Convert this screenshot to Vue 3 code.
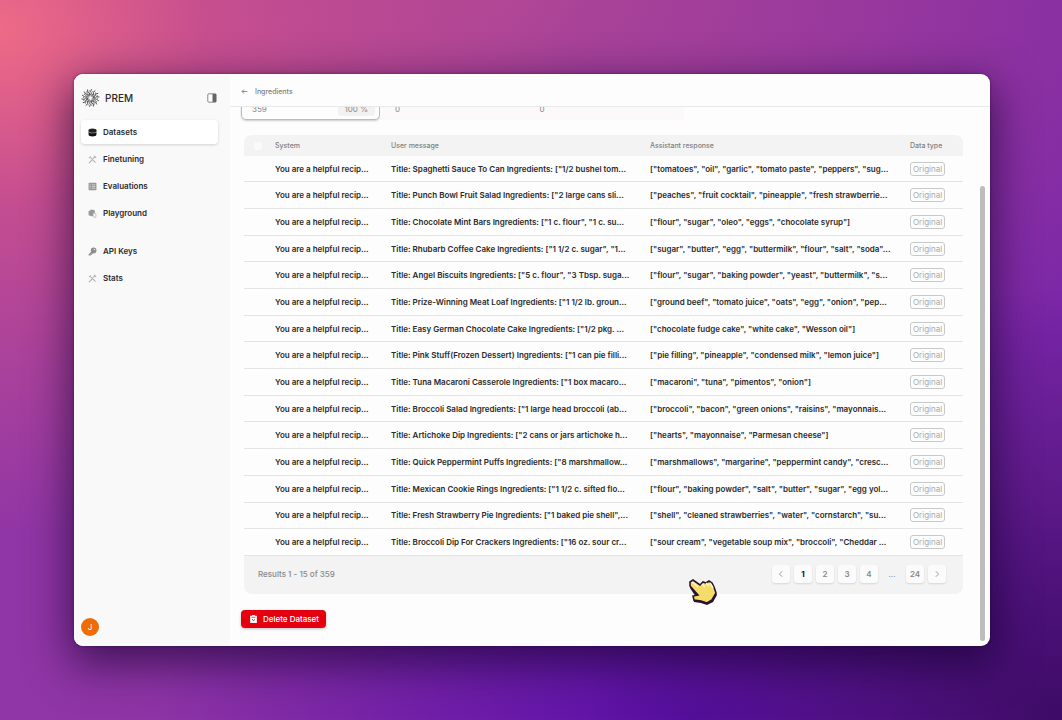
<template>
  <div class="desktop">
    <div class="window">
      <aside class="sidebar">
        <div class="brand">
          <svg class="brand__logo" viewBox="0 0 40 40" aria-hidden="true">
            <g v-for="n in 14" :key="n" :transform="`rotate(${n * 25.7} 20 20)`">
              <path d="M20 14l3-4-3-3 2-5" fill="none" stroke="#444" stroke-width="1.8" stroke-linecap="round" />
              <circle cx="25" cy="6" r="1.1" fill="#444" />
            </g>
            <circle cx="20" cy="20" r="8" fill="none" stroke="#555" stroke-width="2" stroke-dasharray="3 2" />
            <circle cx="20" cy="20" r="4" fill="none" stroke="#777" stroke-width="1.5" stroke-dasharray="2 1" />
          </svg>
          <span class="brand__name">PREM</span>
          <button class="brand__toggle" aria-label="Toggle sidebar">
            <svg viewBox="0 0 10 10">
              <rect x="0.8" y="0.8" width="8.4" height="8.4" rx="1" fill="#fff" stroke="#888" />
              <path d="M5.5 1h3.5v8H5.5z" fill="#666" />
            </svg>
          </button>
        </div>

        <nav class="menu">
          <a
            v-for="item in menu"
            :key="item.label"
            href="#"
            class="menu__item"
            :class="{ '-active': item.active, '-spaced': item.spaced }"
          >
            <svg class="menu__icon" viewBox="0 0 16 16" aria-hidden="true">
              <template v-if="item.icon === 'database'">
                <path d="M1 4v8c0 4 14 4 14 0V4z" fill="#111" />
                <ellipse cx="8" cy="4" rx="7" ry="3" fill="#222" />
                <path d="M1 6.5c1 3 13 3 14 0" fill="none" stroke="#ddd" />
              </template>
              <template v-else-if="item.icon === 'tools'">
                <path d="M2 14l5-5M9 6l4-3M4 4l9 9M11 2l3 3M2 5l3-2" fill="none" stroke="#b0b0b0" stroke-width="1.8" stroke-linecap="round" />
              </template>
              <template v-else-if="item.icon === 'list'">
                <rect x="1" y="1.5" width="14" height="13" rx="1" fill="#999" />
                <path d="M3 5h2M7 5h6M3 8h2M7 8h6M3 11h2M7 11h6" stroke="#ddd" stroke-width="1.3" />
              </template>
              <template v-else-if="item.icon === 'play'">
                <path d="M1 4l5-3 6 1v9l-5 2-6-2z" fill="#999" />
                <path d="M9 7l5 1v7l-5-1z" fill="#f5f5f5" stroke="#aaa" />
              </template>
              <template v-else>
                <path d="M6 8L1 13v2h4l5-5z" fill="#999" />
                <circle cx="10" cy="6" r="5" fill="#8c8c8c" />
                <circle cx="11.5" cy="4.5" r="1.3" fill="#eee" />
              </template>
            </svg>
            {{ item.label }}
          </a>
        </nav>

        <button class="avatar">J</button>
      </aside>

      <main class="main">
        <header class="topbar">
          <a href="#" class="topbar__back">
            <svg viewBox="0 0 10 10" aria-hidden="true">
              <path d="M9 5H1.5M4.5 2l-3 3 3 3" fill="none" stroke="#777" stroke-width="1.2" />
            </svg>
            Ingredients
          </a>
        </header>

        <div class="content">
          <div class="stats">
            <div class="stats__card">
              <span>359</span>
              <span class="stats__badge">100 %</span>
            </div>
            <div class="stats__rest">
              <span>0</span>
              <span>0</span>
            </div>
          </div>

          <section class="panel">
            <table class="table">
              <thead>
                <tr>
                  <th class="table__pick"><input type="checkbox" aria-label="Select all" /></th>
                  <th class="table__system">System</th>
                  <th class="table__user">User message</th>
                  <th>Assistant response</th>
                  <th class="table__type">Data type</th>
                </tr>
              </thead>
              <tbody>
                <tr v-for="row in rows" :key="row[0]">
                  <td></td>
                  <td>You are a helpful recip...</td>
                  <td>Title: {{ row[0] }}</td>
                  <td>{{ row[1] }}</td>
                  <td><span class="tag">Original</span></td>
                </tr>
              </tbody>
            </table>
            <footer class="pager">
              <span class="pager__info">Results 1 - 15 of 359</span>
              <div class="pager__pages">
                <button class="pager__btn" aria-label="Previous page">
                  <svg viewBox="0 0 10 10"><path d="M6.5 1.5L3 5l3.5 3.5" /></svg>
                </button>
                <button class="pager__btn -current">1</button>
                <button class="pager__btn">2</button>
                <button class="pager__btn">3</button>
                <button class="pager__btn">4</button>
                <span class="pager__gap">...</span>
                <button class="pager__btn">24</button>
                <button class="pager__btn" aria-label="Next page">
                  <svg viewBox="0 0 10 10"><path d="M3.5 1.5L7 5L3.5 8.5" /></svg>
                </button>
              </div>
            </footer>
          </section>

          <button class="delete">
            <svg viewBox="0 0 10 12" aria-hidden="true">
              <path d="M3 0h4v1h3v11H0V1h3z" fill="#fff" />
              <path d="M2 3.5h6M3 6l2 3 2-3" fill="none" stroke="#e5000f" />
            </svg>
            Delete Dataset
          </button>
        </div>
        <div class="scrollbar"></div>
      </main>
    </div>

    <svg class="cursor" viewBox="0 0 30 27" aria-hidden="true">
      <path d="M2 3l3-2 7 5 3-3 3 1 3-2 3 2 2 4 3 7-4 7-6 3-6-2-7-1-1-4 3-1-6-9z" fill="#24104a" transform="translate(0 1)" />
      <path d="M2 3l3-2 7 5 3-3 3 1 3-2 3 2 2 4 2 6-4 7-5 3-6-2-7-1-1-4 5-1-8-9z" fill="#f5dc69" stroke="#2a1426" stroke-width="1.6" />
      <path d="M4 3l6 5M14 5l3 3M18 4l3 3M22 4l3 5" fill="none" stroke="#fff6d0" stroke-width="1.5" />
    </svg>
  </div>
</template>

<script setup>
const menu = [
  { label: 'Datasets', icon: 'database', active: true },
  { label: 'Finetuning', icon: 'tools' },
  { label: 'Evaluations', icon: 'list' },
  { label: 'Playground', icon: 'play' },
  { label: 'API Keys', icon: 'key', spaced: true },
  { label: 'Stats', icon: 'tools' }
]

const rows = [
  ['Spaghetti Sauce To Can Ingredients: ["1/2 bushel tom...', '["tomatoes", "oil", "garlic", "tomato paste", "peppers", "sug...'],
  ['Punch Bowl Fruit Salad Ingredients: ["2 large cans sli...', '["peaches", "fruit cocktail", "pineapple", "fresh strawberrie...'],
  ['Chocolate Mint Bars Ingredients: ["1 c. flour", "1 c. su...', '["flour", "sugar", "oleo", "eggs", "chocolate syrup"]'],
  ['Rhubarb Coffee Cake Ingredients: ["1 1/2 c. sugar", "1...', '["sugar", "butter", "egg", "buttermilk", "flour", "salt", "soda"...'],
  ['Angel Biscuits Ingredients: ["5 c. flour", "3 Tbsp. suga...', '["flour", "sugar", "baking powder", "yeast", "buttermilk", "s...'],
  ['Prize-Winning Meat Loaf Ingredients: ["1 1/2 lb. groun...', '["ground beef", "tomato juice", "oats", "egg", "onion", "pep...'],
  ['Easy German Chocolate Cake Ingredients: ["1/2 pkg. ...', '["chocolate fudge cake", "white cake", "Wesson oil"]'],
  ['Pink Stuff(Frozen Dessert) Ingredients: ["1 can pie filli...', '["pie filling", "pineapple", "condensed milk", "lemon juice"]'],
  ['Tuna Macaroni Casserole Ingredients: ["1 box macaro...', '["macaroni", "tuna", "pimentos", "onion"]'],
  ['Broccoli Salad Ingredients: ["1 large head broccoli (ab...', '["broccoli", "bacon", "green onions", "raisins", "mayonnais...'],
  ['Artichoke Dip Ingredients: ["2 cans or jars artichoke h...', '["hearts", "mayonnaise", "Parmesan cheese"]'],
  ['Quick Peppermint Puffs Ingredients: ["8 marshmallow...', '["marshmallows", "margarine", "peppermint candy", "cresc...'],
  ['Mexican Cookie Rings Ingredients: ["1 1/2 c. sifted flo...', '["flour", "baking powder", "salt", "butter", "sugar", "egg yol...'],
  ['Fresh Strawberry Pie Ingredients: ["1 baked pie shell",...', '["shell", "cleaned strawberries", "water", "cornstarch", "su...'],
  ['Broccoli Dip For Crackers Ingredients: ["16 oz. sour cr...', '["sour cream", "vegetable soup mix", "broccoli", "Cheddar ...']
]
</script>

<style>
body {
  margin: 0;
}
</style>

<style scoped>
.desktop {
  box-sizing: border-box;
  min-height: 100vh;
  padding: 74px 72px 74px 74px;
  display: flex;
  position: relative;
  overflow: hidden;
  font-family: Inter, 'Liberation Sans', sans-serif;
  font-size: 8px;
  line-height: 12px;
  color: #2a2a2a;
  background:
    radial-gradient(ellipse 55% 70% at 0 4%, #ee6a86 0%, rgba(220, 88, 135, 0.65) 35%, transparent 100%),
    radial-gradient(ellipse 75% 60% at 50% 0, rgba(178, 72, 148, 0.85), transparent 100%),
    radial-gradient(ellipse 45% 60% at 100% 100%, #3d0b66, transparent 100%),
    radial-gradient(ellipse 50% 40% at 65% 100%, #5a0fa8, transparent 100%),
    linear-gradient(90deg, #9136a5, #7a26a8);
}

button {
  font: inherit;
  border: none;
  padding: 0;
  cursor: pointer;
}

a {
  color: inherit;
  text-decoration: none;
}

.window {
  flex: 1;
  min-width: 0;
  display: flex;
  overflow: hidden;
  border-radius: 9px;
  background: #fdfdfd;
  box-shadow: 0 14px 44px 4px rgba(20, 0, 45, 0.65), 0 0 3px rgba(30, 0, 50, 0.5);
}

.sidebar {
  box-sizing: border-box;
  width: 156px;
  flex-shrink: 0;
  padding: 14px 12px 10px 7px;
  display: flex;
  flex-direction: column;
  background: #faf9fa;
}

.brand {
  display: flex;
  align-items: center;
  gap: 5px;
  height: 20px;
  padding-right: 1px;
}

.brand__logo {
  width: 19px;
  height: 20px;
}

.brand__name {
  font-size: 10px;
  font-weight: 500;
  flex: 1;
}

.brand__toggle {
  width: 10px;
  height: 10px;
  background: none;
}

.brand__toggle svg {
  display: block;
}

.menu {
  margin-top: 12px;
  display: flex;
  flex-direction: column;
  gap: 3px;
}

.menu__item {
  display: flex;
  align-items: center;
  gap: 6px;
  height: 24px;
  padding-left: 7px;
  border-radius: 4px;
  font-weight: 600;
}

.menu__item.-active {
  background: #fff;
  box-shadow: 0 1px 3px rgba(0, 0, 0, 0.16);
}

.menu__item.-spaced {
  margin-top: 11px;
}

.menu__icon {
  width: 9px;
  height: 9px;
}

.avatar {
  width: 18px;
  height: 18px;
  margin-top: auto;
  border-radius: 50%;
  background: #ee6c05;
  color: #fff;
}

.main {
  flex: 1;
  min-width: 0;
  display: flex;
  flex-direction: column;
  position: relative;
}

.topbar {
  box-sizing: border-box;
  height: 33px;
  padding-top: 3px;
  flex-shrink: 0;
  display: flex;
  align-items: center;
  border-bottom: 1px solid #e9e9e9;
}

.topbar__back {
  display: flex;
  align-items: center;
  gap: 7px;
  padding-left: 11px;
  font-size: 7px;
  font-weight: 500;
  color: #808080;
}

.topbar__back svg {
  width: 7px;
  height: 7px;
}

.content {
  flex: 1;
  min-height: 0;
  padding: 0 27px 0 11px;
  overflow: hidden;
}

/* the page is scrolled, only the bottom of the counters shows */
.stats {
  display: flex;
  margin-top: -16px;
  color: #888;
}

.stats__card,
.stats__rest {
  box-sizing: border-box;
  height: 29px;
  display: flex;
}

.stats__card {
  width: 139px;
  padding: 11px 4px 3px 10px;
  justify-content: space-between;
  border: 1px solid #bbb;
  border-radius: 5px;
  box-shadow: 0 1px 2px rgba(0, 0, 0, 0.2);
}

.stats__badge {
  padding: 0 7px;
  border-radius: 3px;
  background: #f2f2f2;
}

.stats__rest {
  width: 304px;
  padding: 12px 0 0 15px;
  background: #fbf9f9;
}

.stats__rest span {
  flex: 1;
}

.panel {
  margin: 15px 0 0 3px;
  border-radius: 8px;
  overflow: hidden;
  background: #f3f3f3;
}

.table {
  width: 100%;
  height: 421px;
  table-layout: fixed;
  border-collapse: collapse;
}

.table th {
  height: 21px;
  padding: 0;
  text-align: left;
  font-size: 7px;
  font-weight: 500;
  color: #808080;
}

.table td {
  padding: 0;
  white-space: nowrap;
  font-weight: 600;
  border-bottom: 1px solid #e4e4e4;
  background: #fdfdfd;
}

.table__pick {
  width: 31px;
}

.table__pick input {
  display: block;
  width: 8px;
  height: 8px;
  margin: 0 0 0 10px;
  appearance: none;
  border-radius: 2px;
  background: #fafafa;
}

.table__system {
  width: 116px;
}

.table__user {
  width: 259px;
}

.table__type {
  width: 53px;
}

.tag {
  display: inline-block;
  padding: 0 2px;
  border: 1px solid #c8c8c8;
  border-radius: 3px;
  color: #aaa;
  font-weight: 400;
}

.pager {
  box-sizing: border-box;
  display: flex;
  align-items: center;
  justify-content: space-between;
  height: 38px;
  padding: 0 17px 2px 14px;
  color: #888;
}

.pager__info {
  font-weight: 500;
}

.pager__pages {
  display: flex;
  align-items: center;
  gap: 4px;
}

.pager__btn {
  width: 18px;
  height: 18px;
  border-radius: 3px;
  background: #fbfbfb;
  box-shadow: 0 1px 2px rgba(0, 0, 0, 0.12);
  color: #888;
  font-weight: 600;
}

.pager__btn.-current {
  color: #111;
  font-weight: 700;
}

.pager__btn svg {
  display: block;
  width: 8px;
  height: 8px;
  margin: auto;
  fill: none;
  stroke: #888;
}

.pager__gap {
  width: 20px;
  text-align: center;
}

.delete {
  display: flex;
  align-items: center;
  gap: 6px;
  height: 18px;
  margin-top: 16px;
  padding: 0 7px 0 9px;
  border-radius: 4px;
  background: #e5000f;
  color: #fff;
  font-weight: 500;
  box-shadow: 0 1px 3px rgba(0, 0, 0, 0.25);
}

.delete svg {
  width: 7px;
  height: 8px;
}

.scrollbar {
  position: absolute;
  top: 112px;
  right: 5px;
  bottom: 5px;
  width: 5px;
  border-radius: 3px;
  background: #bdbdbd;
}

.cursor {
  position: absolute;
  left: 688px;
  top: 579px;
  width: 30px;
  height: 27px;
}
</style>
